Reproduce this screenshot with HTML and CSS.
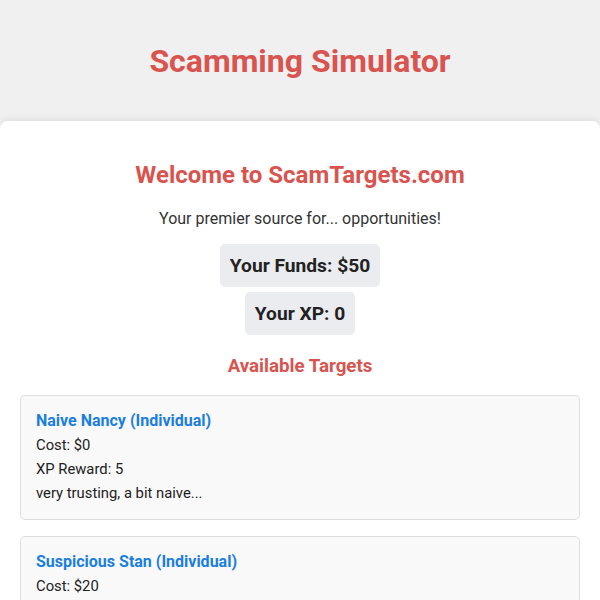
FILE: index.html
```html
<!DOCTYPE html>
<html>
<head>
<meta charset="utf-8">
<link rel="stylesheet" href="styles.css">
</head>
<body>
<header class="site-header">
  <h1 class="site-title">Scamming Simulator</h1>
</header>
<main class="container">
  <h2 class="welcome">Welcome to ScamTargets.com</h2>
  <p class="tagline">Your premier source for... opportunities!</p>
  <div class="stat">Your Funds: $50</div>
  <div class="stat">Your XP: 0</div>
  <h3 class="section-title">Available Targets</h3>
  <div class="target">
    <h4 class="target-name">Naive Nancy (Individual)</h4>
    <p class="target-line">Cost: $0</p>
    <p class="target-line">XP Reward: 5</p>
    <p class="target-line">very trusting, a bit naive...</p>
  </div>
  <div class="target">
    <h4 class="target-name">Suspicious Stan (Individual)</h4>
    <p class="target-line">Cost: $20</p>
    <p class="target-line">XP Reward: 15</p>
    <p class="target-line">skeptical, hard to fool...</p>
  </div>
</main>
</body>
</html>
```
FILE: styles.css
```css
html, body {
  margin: 0;
  padding: 0;
}
body {
  background: #f0f0f0;
  font-family: Roboto, "Liberation Sans", Arial, sans-serif;
  color: #222;
}
.site-header {
  height: 121px;
  display: flex;
  align-items: center;
  justify-content: center;
}
.site-title {
  margin: 0;
  font-size: 32px;
  font-weight: 700;
  color: #d9534f;
}
.container {
  background: #fff;
  border-radius: 8px 8px 0 0;
  box-shadow: 0 0 10px rgba(0, 0, 0, 0.1);
  padding: 20px;
  min-height: 600px;
}
.welcome {
  text-align: center;
  color: #d9534f;
  font-size: 24px;
  font-weight: 700;
  margin: 20px 0 20px;
}
.tagline {
  text-align: center;
  font-size: 16px;
  margin: 0 0 16px;
  color: #333;
}
.stat {
  width: fit-content;
  margin: 5px auto;
  background: #eaecef;
  border-radius: 5px;
  padding: 10px;
  font-size: 19.2px;
  font-weight: 700;
  line-height: 23px;
  color: #222;
}
.section-title {
  text-align: center;
  color: #d9534f;
  font-size: 18.72px;
  font-weight: 700;
  line-height: 22px;
  margin: 20px 0 18px;
}
.target {
  background: #f9f9f9;
  border: 1px solid #ddd;
  border-radius: 5px;
  padding: 15px 15px 16px;
  margin-bottom: 16px;
}
.target-name {
  margin: 0 0 6px;
  font-size: 16px;
  font-weight: 700;
  color: #1a7ee0;
  line-height: 19px;
}
.target-line {
  margin: 5px 0 0;
  font-size: 14.8px;
  line-height: 19px;
  color: #222;
}
```
